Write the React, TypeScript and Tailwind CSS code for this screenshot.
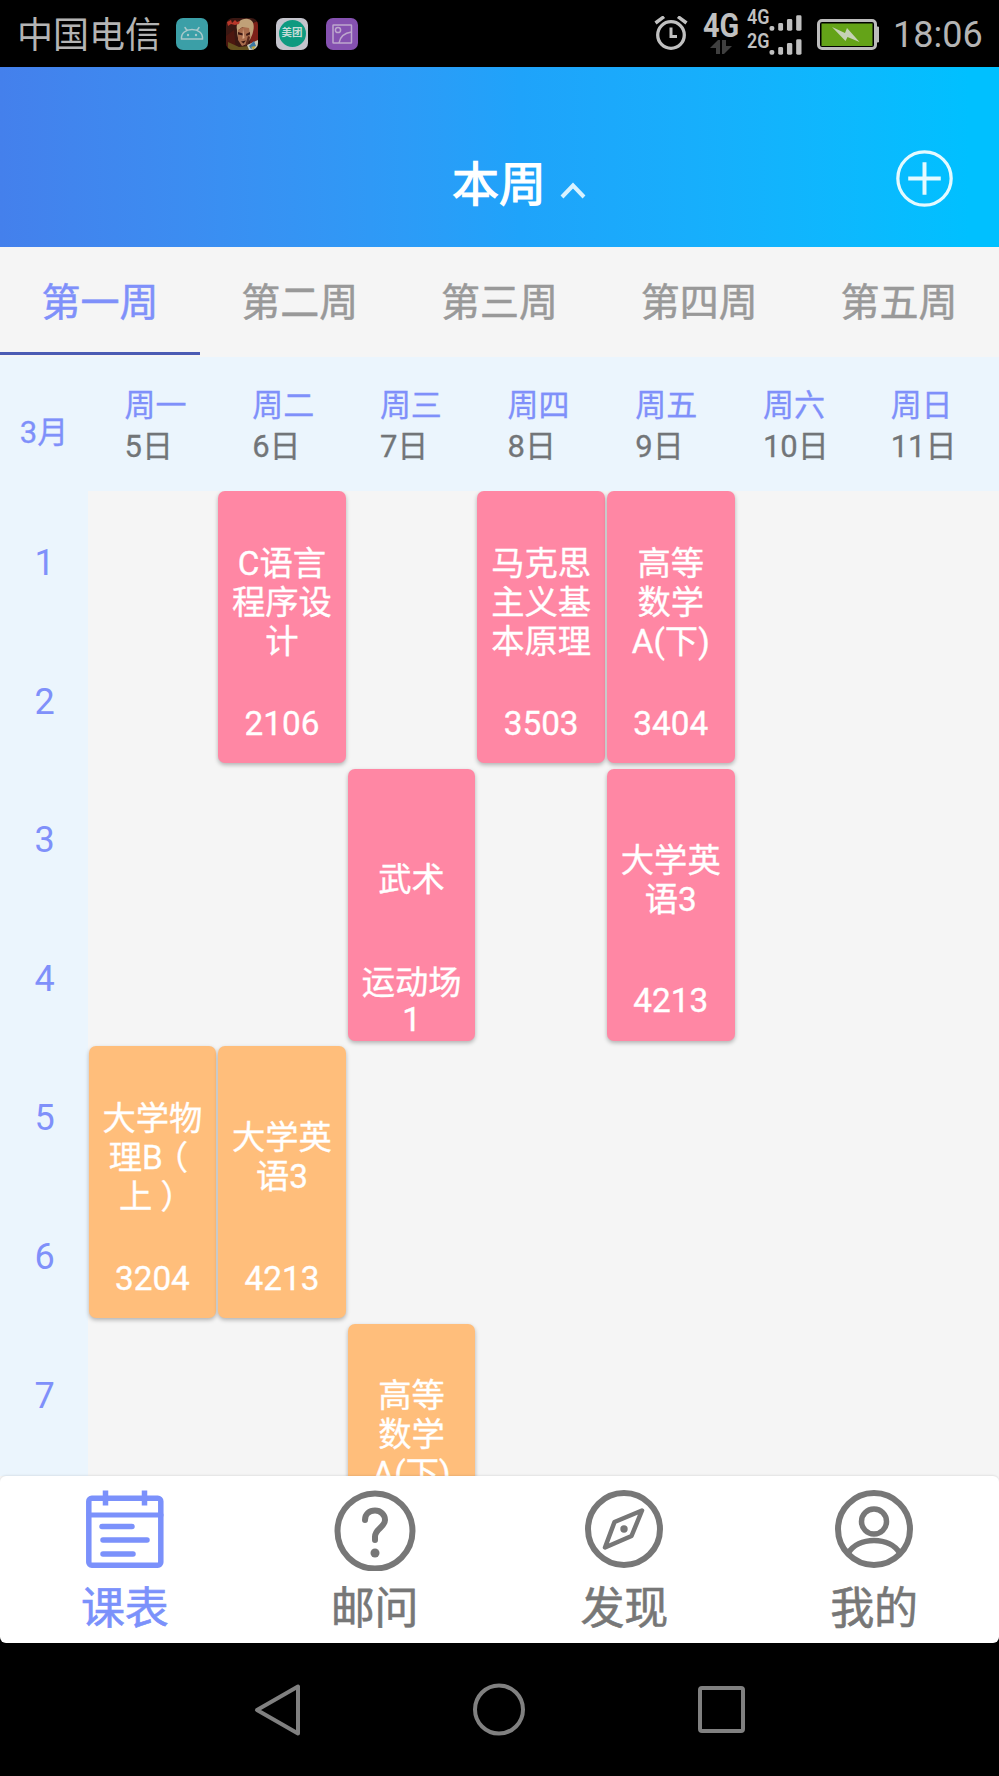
import type { ReactNode } from "react";

const weekTabs = ["第一周", "第二周", "第三周", "第四周", "第五周"];

const days = [
  { name: "周一", date: "5日" },
  { name: "周二", date: "6日" },
  { name: "周三", date: "7日" },
  { name: "周四", date: "8日" },
  { name: "周五", date: "9日" },
  { name: "周六", date: "10日" },
  { name: "周日", date: "11日" },
];

const periods = [1, 2, 3, 4, 5, 6, 7];

type Course = { lines: string[]; room: string[]; place: string; color: string };

const PINK = "bg-[#ff87a4]";
const ORANGE = "bg-[#ffbe7b]";

const courses: Course[] = [
  { lines: ["C语言", "程序设", "计"], room: ["2106"], place: "col-start-2 row-start-1", color: PINK },
  { lines: ["马克思", "主义基", "本原理"], room: ["3503"], place: "col-start-4 row-start-1", color: PINK },
  { lines: ["高等", "数学", "A(下)"], room: ["3404"], place: "col-start-5 row-start-1", color: PINK },
  { lines: ["武术"], room: ["运动场", "1"], place: "col-start-3 row-start-3", color: PINK },
  { lines: ["大学英", "语3"], room: ["4213"], place: "col-start-5 row-start-3", color: PINK },
  { lines: ["大学物", "理B（", "上）"], room: ["3204"], place: "col-start-1 row-start-5", color: ORANGE },
  { lines: ["大学英", "语3"], room: ["4213"], place: "col-start-2 row-start-5", color: ORANGE },
  { lines: ["高等", "数学", "A(下)"], room: [], place: "col-start-3 row-start-7", color: ORANGE },
];

// Full-width brackets are nudged to the middle of their cell.
function Line({ text }: { text: string }) {
  return (
    <div className="h-[39px] whitespace-nowrap">
      {text.split(/([（）])/).map((part, i) => {
        if (part === "（") {
          return (
            <span key={i} className="inline-block -translate-x-[8px]">
              {part}
            </span>
          );
        }
        if (part === "）") {
          return (
            <span key={i} className="inline-block translate-x-[8px]">
              {part}
            </span>
          );
        }
        return part;
      })}
    </div>
  );
}

function CourseCard({ course }: { course: Course }) {
  return (
    <div
      className={`${course.place} ${course.color} row-span-2 flex h-[272px] w-[127.6px] flex-col rounded-[7px] text-center text-[33.3px] leading-[39px] text-white shadow-[0_2px_4px_rgba(0,0,0,0.28)] [-webkit-text-stroke:0.35px]`}
    >
      <div className="flex h-[192px] flex-col justify-center pt-[30px]">
        {course.lines.map((l) => (
          <Line key={l} text={l} />
        ))}
      </div>
      <div className="flex h-[80px] flex-col justify-center -space-y-[2px]">
        {course.room.map((l) => (
          <Line key={l} text={l} />
        ))}
      </div>
    </div>
  );
}

function StatusBar() {
  return (
    <div className="flex h-[67px] items-center bg-black text-[#b4b4b4]">
      <span className="mt-[4px] ml-[17px] w-[143px] text-[36px] leading-[40px] whitespace-nowrap">中国电信</span>
      <svg className="ml-[16px] h-8 w-8" viewBox="0 0 32 32">
        <rect width="32" height="32" rx="7" fill="#3b9fa7" />
        <g fill="none" stroke="#a9c9cb" strokeWidth="1.5" strokeLinecap="round">
          <path d="M5.500 21C5 15 10 11.500 16 11.500S27 15 26.500 21ZM9 9.500l2 3M23 9.500l-2 3" />
        </g>
        <circle cx="12" cy="17" r="1.200" fill="#a9c9cb" />
        <circle cx="20" cy="17" r="1.200" fill="#a9c9cb" />
      </svg>
      <svg className="ml-[18px] h-8 w-8" viewBox="0 0 32 32">
        <defs>
          <clipPath id="avatar">
            <rect width="32" height="32" rx="7" />
          </clipPath>
        </defs>
        <g clipPath="url(#avatar)">
          <rect width="32" height="32" fill="#3a1712" />
          <path d="M25 6l7-3v22l-8 2z" fill="#7d1f18" />
          <path d="M0 18l8-6 2 20H0z" fill="#4c1710" />
          <path d="M11 12C9 4 16 0 22 1c6 1 7 7 4.500 15l-3 7-1-11-6-3-4 3-1 8z" fill="#c0a178" />
          <path d="M12 12l5-3 6 1 1.500 9-3.500 7-5 2-4-6z" fill="#a86c4c" />
          <path d="M12 14l5 1.500v2l-5-1zM20 16l4-2v2.500l-3.500 1.500zM15 23.500l5-1-2.500 3z" fill="#3c1812" />
          <path d="M17 10l1.500 10-2 1z" fill="#d9a886" />
          <path d="M22 18l2 1-2 7-3 2z" fill="#5d2a1c" />
          <path d="M1 4l4-2 1 3 3-3 2 2 3-1-1 3-4 1-4-1-3 2z" fill="#b8372a" />
          <path d="M2 24l11 5 9-1 1 4H2z" fill="#66521f" />
          <path d="M21 27l11-5v10h-9z" fill="#c6c6b4" />
          <path d="M28 23l2 5-5 3-2-3z" fill="#3c78a4" />
          <path d="M25 29l4-1-1 4z" fill="#bca53c" />
        </g>
      </svg>
      <div className="ml-[18px] flex h-8 w-8 items-center justify-center rounded-[7px] bg-[#c4c4cc]">
        <div className="flex h-[27px] w-[27px] items-center justify-center rounded-full bg-[#0e9a80] text-[10.5px] leading-none font-bold whitespace-nowrap text-[#c6dcd8]">
          美团
        </div>
      </div>
      <svg className="ml-[18px] h-8 w-8" viewBox="0 0 32 32">
        <rect width="32" height="32" rx="7" fill="#8551b0" />
        <g fill="none" stroke="#bda7cd" strokeWidth="1.500">
          <rect x="7" y="7" width="18.500" height="18" rx="0.500" />
          <circle cx="12" cy="12" r="2.600" />
          <path d="M13 25c1-6 5-10 12.500-11" />
        </g>
      </svg>
      <div className="flex-1" />
      <svg className="h-9 w-[34px]" viewBox="0 0 34 36" fill="none" stroke="#c0c0c0">
        <circle cx="17" cy="19" r="13.300" strokeWidth="3.300" />
        <path d="M17 11.500v9h6" strokeWidth="3" />
        <path d="M1.500 7L10 0.700M32.500 7L24 0.700" strokeWidth="3.500" />
      </svg>
      <div className="ml-[15px] flex h-[46px] w-[36px] flex-col items-center pt-[1px]">
        <span className="h-[27px] origin-center scale-x-[0.86] text-[33.500px] leading-[27px] font-bold text-[#c0c0c0]">4G</span>
        <svg className="mt-[1px] h-[14px] w-[22px] shrink-0" viewBox="0 0 22 14" fill="#3f3f3f">
          <path d="M10 0v14H6V8H0L8 0zM12 14V0h4v6h6l-8 8z" />
        </svg>
      </div>
      <div className="ml-[8px] flex flex-col gap-[1px] text-[#c0c0c0]">
        {["4G", "2G"].map((label) => (
          <div key={label} className="flex h-[23px] w-[56px] items-start">
            <span className="w-[22px] origin-left scale-x-[0.92] text-[19.500px] leading-[16px] font-semibold">{label}</span>
            <svg className="mt-[4px] h-[18px] w-[33px]" viewBox="0 0 34 18" fill="#c0c0c0">
              <rect x="0.500" y="12" width="5" height="5" rx="2" />
              <rect x="9.500" y="9" width="5" height="8" rx="1.500" />
              <rect x="18.500" y="5" width="5.500" height="12" rx="1.500" />
              <rect x="28" y="1" width="5.500" height="16" rx="1.500" />
            </svg>
          </div>
        ))}
      </div>
      <svg className="mt-[2px] ml-[14px] h-[32px] w-[62px]" viewBox="0 0 62 32">
        <rect x="1.500" y="1.500" width="57" height="28" rx="3.500" fill="#000" stroke="#bcbcbc" strokeWidth="3" />
        <path d="M60 8h1.500v15H60z" fill="#bcbcbc" stroke="#bcbcbc" />
        <rect x="4.500" y="4.500" width="51" height="22.500" fill="#64a318" />
        <path d="M15 8l13 6 2-5 12.500 14-12-5-2 4z" fill="#c6d2b6" />
      </svg>
      <span className="mt-[2px] mr-[18px] ml-[14px] w-[88px] text-[36px] leading-[42px] whitespace-nowrap">18:06</span>
    </div>
  );
}

function Header() {
  return (
    <header className="flex h-[180px] items-start bg-gradient-to-r from-[#4480ec] via-[#1fa3fa] via-52% to-[#00c0ff] to-97% text-white">
      <div className="flex flex-1 items-start pl-[452px]">
        <h1 className="mt-[88px] text-[47px] leading-[60px] font-normal [-webkit-text-stroke:1.2px]">本周</h1>
        <svg className="mt-[115px] ml-[14px] h-[17px] w-[27px]" viewBox="0 0 27 17" fill="none" stroke="#d8f2ff" strokeWidth="4">
          <path d="M2 15L13 3.500L24 15" />
        </svg>
      </div>
      <svg className="mt-[83px] mr-[46px] h-[57px] w-[57px]" viewBox="0 0 56 56" fill="none" stroke="#e4faff" strokeWidth="3.200">
        <circle cx="28" cy="28" r="26.200" />
        <path d="M12 28h32M28 12v32" strokeWidth="3.900" />
      </svg>
    </header>
  );
}

function NavItem({ label, active, children }: { label: string; active?: boolean; children: ReactNode }) {
  return (
    <div className={`flex flex-1 flex-col items-center ${active ? "text-[#7b91fb]" : "text-[#777777]"}`}>
      <svg className="mt-[13px] h-[82px] w-[82px]" viewBox="0 0 82 82" fill="none" stroke="currentColor" strokeLinecap="round">
        {children}
      </svg>
      <span className="mt-[9px] text-[44px] leading-[58px] [-webkit-text-stroke:0.6px]">{label}</span>
    </div>
  );
}

export default function App() {
  return (
    <div className="flex h-[1776px] w-[999px] flex-col overflow-hidden bg-[#f5f5f5] font-[Roboto,'Noto_Sans_CJK_SC',sans-serif]">
      <StatusBar />
      <Header />

      <div className="flex h-[110px] shrink-0">
        {weekTabs.map((t, i) => (
          <div
            key={t}
            className={`flex h-[108px] flex-1 items-center justify-center border-b-3 pt-[7px] text-[39px] leading-[50px] [-webkit-text-stroke:0.5px] ${i === 0 ? "border-[#4a5bb4] text-[#7f90fa]" : "border-transparent text-[#999999]"}`}
          >
            {t}
          </div>
        ))}
      </div>

      <div className="flex h-[134px] shrink-0 bg-[#ebf5fd] text-[31px]">
        <div className="w-[88px] pt-[56px] text-center leading-[40px] text-[#7f90fa] [-webkit-text-stroke:0.3px]">3月</div>
        {days.map((d) => (
          <div key={d.name} className="w-[127.700px] pt-[28px] pl-[36.500px] leading-[41px] [-webkit-text-stroke:0.3px]">
            <div className="text-[#7f90fa]">{d.name}</div>
            <div className="text-[#727578]">{d.date}</div>
          </div>
        ))}
      </div>

      <div className="flex h-[985px] shrink-0 overflow-hidden">
        <div className="w-[88px] shrink-0 bg-[#ebf5fd]">
          {periods.map((p) => (
            <div key={p} className="flex h-[138.800px] items-center justify-center pt-[5px] pl-[1px] text-[36px] text-[#7f90fa]">
              {p}
            </div>
          ))}
        </div>
        <div className="ml-[0.600px] grid grid-cols-[repeat(7,129.600px)] grid-rows-[repeat(8,138.800px)]">
          {courses.map((c) => (
            <CourseCard key={c.place} course={c} />
          ))}
        </div>
      </div>

      <div className="h-[167px] shrink-0 bg-gradient-to-b from-[#f5f5f5] from-50% to-black to-50%">
        <nav className="flex h-[167px] rounded-[6px] bg-white shadow-[0_-1px_2px_rgba(0,0,0,0.08)]">
          <NavItem label="课表" active>
            <rect x="4.800" y="9.300" width="72" height="67" rx="3" strokeWidth="5.500" />
            <path d="M5 26h72" strokeWidth="5" />
            <path d="M21.500 1.500v15M60.500 1.500v15" strokeWidth="5.500" strokeLinecap="butt" />
            <path d="M18 37.500h30M19 51h44M19 65h30" strokeWidth="5.500" />
          </NavItem>
          <NavItem label="邮问">
            <circle cx="41" cy="42" r="37.500" strokeWidth="6" />
            <path d="M31 31c0-6 4.500-9.500 10-9.500S51 25.500 51 31c0 7-10 9-10 16.500V51" strokeWidth="6" />
            <circle cx="41" cy="64" r="4.500" fill="currentColor" stroke="none" />
          </NavItem>
          <NavItem label="发现">
            <circle cx="41" cy="40" r="36" strokeWidth="6" />
            <path d="M59 21.500L31.500 33L22 58.500L48.500 47Z" strokeWidth="4.500" strokeLinejoin="round" />
            <circle cx="41" cy="40" r="3.700" fill="currentColor" stroke="none" />
          </NavItem>
          <NavItem label="我的">
            <circle cx="41" cy="40" r="36" strokeWidth="6" />
            <circle cx="41" cy="32.500" r="12.500" strokeWidth="5.500" />
            <path d="M15 64.500C20 56 30 51.500 41 51.500S62 56 67 64.500" strokeWidth="5.500" />
          </NavItem>
        </nav>
      </div>

      <div className="flex h-[133px] shrink-0 items-start bg-black pt-[40px]">
        <svg className="ml-[254px] h-[54px] w-[48px]" viewBox="0 0 48 54" fill="none" stroke="#808080" strokeWidth="4" strokeLinejoin="round">
          <path d="M44 3.500V50.500L3 27Z" />
        </svg>
        <svg className="ml-[170px] h-[54px] w-[54px]" viewBox="0 0 54 54" fill="none" stroke="#808080" strokeWidth="4">
          <circle cx="27" cy="26.500" r="24" />
        </svg>
        <div className="mt-[3px] ml-[172px] h-[47px] w-[47px] rounded-[4px] border-4 border-[#808080]" />
      </div>
    </div>
  );
}
